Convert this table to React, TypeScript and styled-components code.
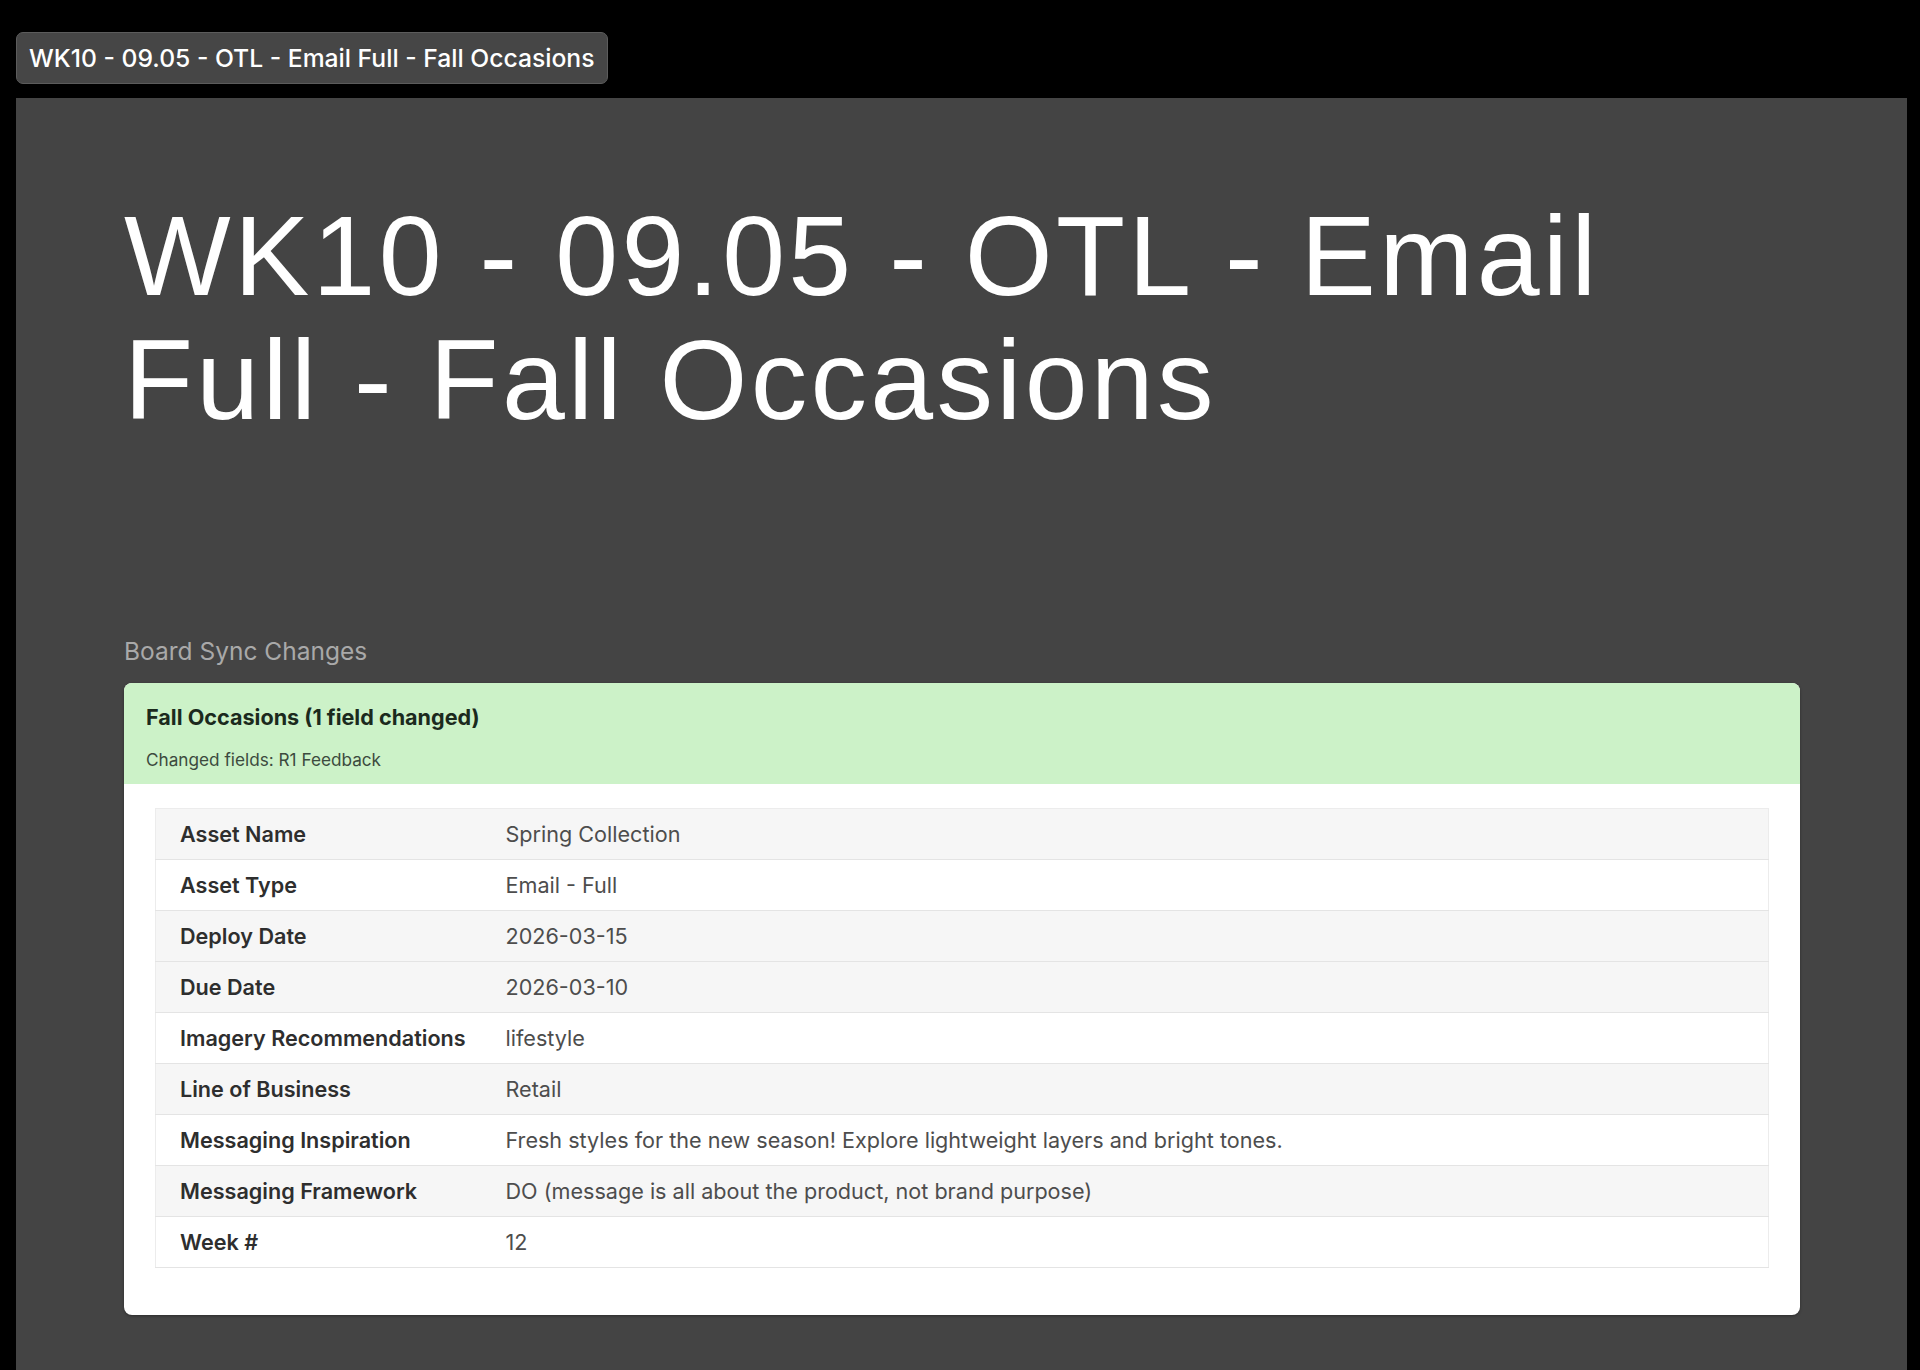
import React from 'react';
import styled, { createGlobalStyle } from 'styled-components';

const Global = createGlobalStyle`
  html, body {
    margin: 0;
    padding: 0;
    background: #000;
  }
  body {
    font-family: Inter, "Noto Sans", sans-serif;
    -webkit-font-smoothing: antialiased;
  }
`;

const Page = styled.div`
  box-sizing: border-box;
  min-height: 1370px;
  padding: 32px 13px 0 16px;
  display: flex;
  flex-direction: column;
  align-items: flex-start;
  gap: 14px;
`;

const Tab = styled.div`
  box-sizing: border-box;
  height: 52px;
  padding: 0 12px;
  display: flex;
  align-items: center;
  background: #464646;
  border: 1px solid #5c5c5c;
  border-radius: 7px;
  color: #fff;
  font-size: 24.7px;
  font-weight: 500;
  white-space: nowrap;
`;

const Panel = styled.main`
  align-self: stretch;
  background: #444444;
  padding: 94px 107px 55px 108px;
  border-bottom: 2px solid #7a7a7a;
  display: flex;
  flex-direction: column;
`;

const Heading = styled.h1`
  margin: 0 0 195px;
  font-family: "Liberation Sans", Arial, Helvetica, sans-serif;
  font-weight: 400;
  font-size: 113px;
  line-height: 124px;
  letter-spacing: 3.3px;
  color: #fff;
  transform: translateY(2px);
`;

const SectionLabel = styled.h2`
  margin: 0 0 16px;
  font-size: 24.5px;
  line-height: 32px;
  font-weight: 400;
  color: #a9a9a9;
`;

const Card = styled.section`
  background: #fff;
  border-radius: 8px;
  overflow: hidden;
  box-shadow: 0 1px 3px rgba(0, 0, 0, 0.35);
`;

const CardHeader = styled.header`
  background: #ccf2c8;
  padding: 20px 22px 12px;
  display: flex;
  flex-direction: column;
  gap: 17px;
`;

const CardTitle = styled.div`
  font-size: 21.6px;
  line-height: 28px;
  font-weight: 700;
  color: #1b2a1d;
`;

const CardSub = styled.div`
  font-size: 17.2px;
  line-height: 24px;
  color: #3c4b3e;
`;

const CardBody = styled.div`
  padding: 24px 31px 47px;
`;

const Table = styled.table`
  width: 100%;
  border-collapse: collapse;
  table-layout: fixed;
  border: 1px solid #ececec;
`;

const Row = styled.tr<{ $shade: boolean }>`
  background: ${(p) => (p.$shade ? '#f6f6f6' : '#ffffff')};
`;

const LabelCell = styled.th`
  box-sizing: border-box;
  width: 326px;
  height: 50px;
  padding: 0 24px;
  text-align: left;
  font-size: 21.6px;
  font-weight: 600;
  color: #2e2e2e;
  border-bottom: 1px solid #e4e4e4;
  white-space: nowrap;
`;

const ValueCell = styled.td`
  height: 50px;
  padding: 0 24px;
  font-size: 21.6px;
  font-weight: 400;
  color: #4d4d4d;
  border-bottom: 1px solid #e4e4e4;
  white-space: nowrap;
`;

const rows: { label: string; value: string; shade: boolean }[] = [
  { label: 'Asset Name', value: 'Spring Collection', shade: true },
  { label: 'Asset Type', value: 'Email - Full', shade: false },
  { label: 'Deploy Date', value: '2026-03-15', shade: true },
  { label: 'Due Date', value: '2026-03-10', shade: true },
  { label: 'Imagery Recommendations', value: 'lifestyle', shade: false },
  { label: 'Line of Business', value: 'Retail', shade: true },
  {
    label: 'Messaging Inspiration',
    value: 'Fresh styles for the new season! Explore lightweight layers and bright tones.',
    shade: false,
  },
  {
    label: 'Messaging Framework',
    value: 'DO (message is all about the product, not brand purpose)',
    shade: true,
  },
  { label: 'Week #', value: '12', shade: false },
];

export default function App() {
  return (
    <>
      <Global />
      <Page>
        <Tab>WK10 - 09.05 - OTL - Email Full - Fall Occasions</Tab>
        <Panel>
          <Heading>WK10 - 09.05 - OTL - Email Full - Fall Occasions</Heading>
          <SectionLabel>Board Sync Changes</SectionLabel>
          <Card>
            <CardHeader>
              <CardTitle>Fall Occasions (1 field changed)</CardTitle>
              <CardSub>Changed fields: R1 Feedback</CardSub>
            </CardHeader>
            <CardBody>
              <Table>
                <tbody>
                  {rows.map((r) => (
                    <Row key={r.label} $shade={r.shade}>
                      <LabelCell scope="row">{r.label}</LabelCell>
                      <ValueCell>{r.value}</ValueCell>
                    </Row>
                  ))}
                </tbody>
              </Table>
            </CardBody>
          </Card>
        </Panel>
      </Page>
    </>
  );
}
